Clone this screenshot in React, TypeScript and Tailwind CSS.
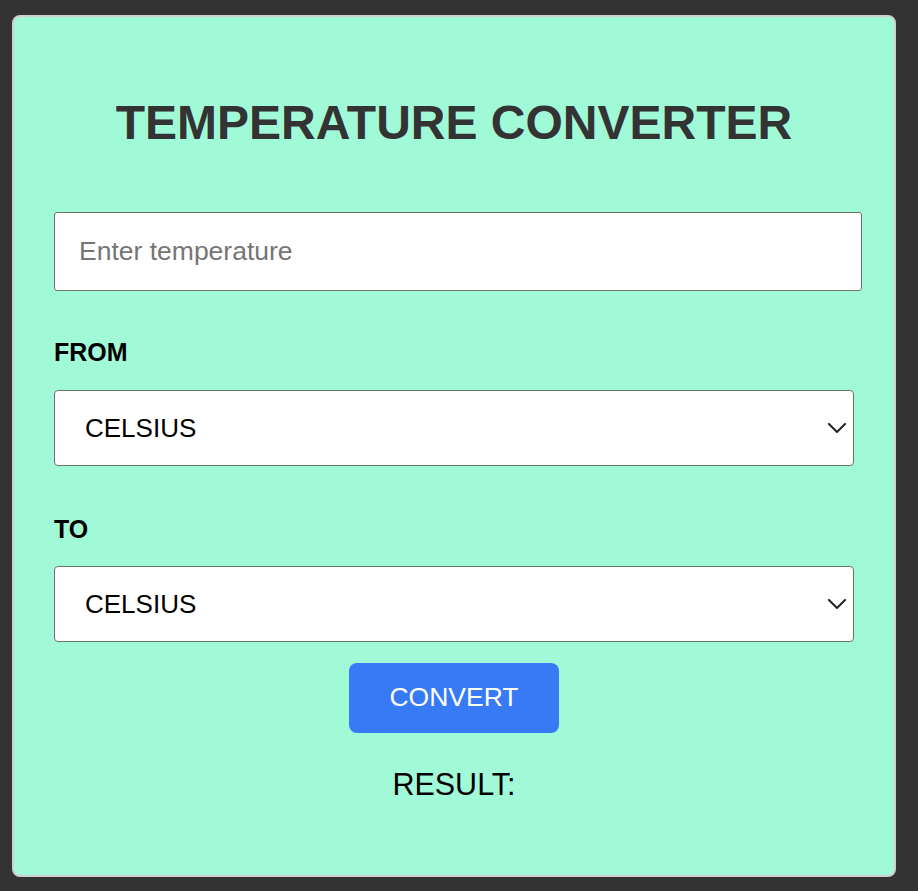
import React from "react";

function Chevron() {
  return (
    <svg
      width="18"
      height="10"
      viewBox="0 0 18 10"
      fill="none"
      className="pointer-events-none absolute right-[8px] top-1/2 -translate-y-1/2"
    >
      <path d="M1 1 L9 9 L17 1" stroke="#222" strokeWidth="2" strokeLinecap="square" />
    </svg>
  );
}

function UnitSelect() {
  return (
    <div className="relative w-[800px]">
      <select
        defaultValue="celsius"
        className="block h-[76px] w-full appearance-none rounded-[4px] border border-[#707070] bg-white pl-[30px] text-[26px] text-black outline-none"
      >
        <option value="celsius">CELSIUS</option>
        <option value="fahrenheit">FAHRENHEIT</option>
        <option value="kelvin">KELVIN</option>
      </select>
      <Chevron />
    </div>
  );
}

export default function App() {
  return (
    <div className="min-h-screen bg-[#333333] pl-[12px] pt-[15px] pb-[14px] font-['Liberation_Sans',Arial,sans-serif]">
      <div className="w-[884px] rounded-[8px] border-2 border-[#cfcfcf] bg-[#a1fad7] px-[40px] pb-[74px]">
        <h1 className="mt-[78px] text-center text-[48px] font-bold leading-[55px] text-[#333333]">
          TEMPERATURE CONVERTER
        </h1>

        <input
          type="text"
          placeholder="Enter temperature"
          className="mt-[62px] block h-[79px] w-[808px] rounded-[3px] border border-[#707070] bg-white px-[24px] text-[26.5px] text-black outline-none placeholder:text-[#757575]"
        />

        <label className="mt-[47px] block text-[25px] font-bold leading-[28px] text-black">FROM</label>
        <div className="mt-[24px]">
          <UnitSelect />
        </div>

        <label className="mt-[49px] block text-[25px] font-bold leading-[28px] text-black">TO</label>
        <div className="mt-[23px]">
          <UnitSelect />
        </div>

        <div className="mt-[21px] flex justify-center">
          <button className="h-[70px] w-[210px] rounded-[8px] bg-[#387af6] text-[26.5px] text-white">
            CONVERT
          </button>
        </div>

        <p className="mt-[34px] text-center text-[30.5px] leading-[34px] text-black">RESULT:</p>
      </div>
    </div>
  );
}
